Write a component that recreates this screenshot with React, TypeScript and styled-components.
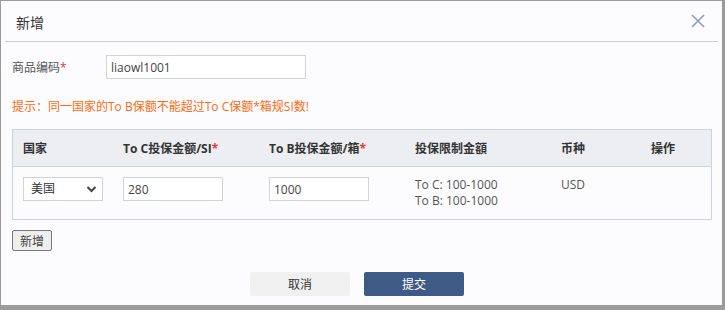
import React from "react";
import styled, { createGlobalStyle } from "styled-components";

const Global = createGlobalStyle`
  html, body { margin: 0; padding: 0; background: #9b9b9b; }
  body { font-family: "Open Sans", "Noto Sans CJK SC", sans-serif; font-size: 12px; color: #333; }
  * { box-sizing: border-box; }
`;

const Dialog = styled.div`
  margin: 1px 0 0 1px;
  width: 721px;
  height: 304px;
  background: #fcfcfe;
  display: flex;
  flex-direction: column;
  box-shadow: 0 1px 0 #c9c9c9;
`;

const Header = styled.div`
  height: 41px;
  margin: 0 4px;
  padding: 0 7px 0 11px;
  display: flex;
  align-items: center;
  justify-content: space-between;
  border-bottom: 1px solid #c9ccdc;
`;

const Title = styled.div`
  font-size: 14px;
  color: #333;
  padding-top: 1px;
`;

const Close = styled.button`
  border: none;
  background: none;
  padding: 0;
  margin-right: 6px;
  width: 14px;
  height: 14px;
  display: flex;
  cursor: pointer;
`;

const Body = styled.div`
  padding: 13px 10px 0 11px;
  display: flex;
  flex-direction: column;
`;

const FormRow = styled.div`
  display: flex;
  align-items: center;
  height: 24px;
`;

const Label = styled.div`
  width: 94px;
  color: #555;
`;

const Req = styled.span`
  color: #e33;
`;

const TextInput = styled.input<{ $w: number }>`
  width: ${(p) => p.$w}px;
  height: 24px;
  border: 1px solid #cfd3dc;
  background: #fff;
  padding: 0 4px;
  font-family: inherit;
  font-size: 12px;
  color: #444;
  outline: none;
`;

const Hint = styled.div`
  margin-top: 20px;
  color: #ff6a0f;
  line-height: 16px;
`;

const Table = styled.div`
  margin-top: 14px;
  border: 1px solid #c9d2de;
`;

const Grid = styled.div<{ $head?: boolean }>`
  display: grid;
  grid-template-columns: 100px 146px 146px 146px 90px 1fr;
  background: ${(p) => (p.$head ? "#eceef2" : "#fcfcfe")};
  height: ${(p) => (p.$head ? "36px" : "53px")};
  border-top: ${(p) => (p.$head ? "none" : "1px solid #c9d2de")};
  align-items: ${(p) => (p.$head ? "center" : "start")};
`;

const HeadCell = styled.div`
  padding-left: 10px;
  font-weight: 700;
  color: #333;
`;

const Cell = styled.div`
  padding: 10px 0 0 10px;
  color: #555;
  line-height: 16px;
`;

const SelectBox = styled.div`
  width: 80px;
  height: 24px;
  border: 1px solid #cfd3dc;
  background: #fff;
  display: flex;
  align-items: center;
  justify-content: space-between;
  padding: 0 5px 0 7px;
  color: #333;
`;

const SmallButton = styled.button`
  margin-top: 10px;
  align-self: flex-start;
  width: 40px;
  height: 21px;
  padding: 0;
  border: 1px solid #777;
  border-radius: 2px;
  background: #efefef;
  font-family: inherit;
  font-size: 12px;
  color: #444;
`;

const Footer = styled.div`
  margin-top: 21px;
  display: flex;
  justify-content: center;
  gap: 14px;
  padding-right: 10px;
`;

const FooterButton = styled.button<{ $primary?: boolean }>`
  width: 100px;
  height: 24px;
  border: none;
  border-radius: 2px;
  font-family: inherit;
  font-size: 12px;
  background: ${(p) => (p.$primary ? "#3e5a86" : "#f0f0f0")};
  color: ${(p) => (p.$primary ? "#fff" : "#333")};
`;

export default function App() {
  return (
    <>
      <Global />
      <Dialog>
        <Header>
          <Title>新增</Title>
          <Close aria-label="close">
            <svg width="14" height="14" viewBox="0 0 14 14">
              <path d="M1 1L13 13M13 1L1 13" stroke="#8a9cc0" strokeWidth="1.6" fill="none" />
            </svg>
          </Close>
        </Header>
        <Body>
          <FormRow>
            <Label>
              商品编码<Req>*</Req>
            </Label>
            <TextInput $w={200} defaultValue="liaowl1001" />
          </FormRow>
          <Hint>提示：同一国家的To B保额不能超过To C保额*箱规SI数!</Hint>
          <Table>
            <Grid $head>
              <HeadCell>国家</HeadCell>
              <HeadCell>
                To C投保金额/SI<Req>*</Req>
              </HeadCell>
              <HeadCell>
                To B投保金额/箱<Req>*</Req>
              </HeadCell>
              <HeadCell>投保限制金額</HeadCell>
              <HeadCell>币种</HeadCell>
              <HeadCell>操作</HeadCell>
            </Grid>
            <Grid>
              <Cell>
                <SelectBox>
                  <span>美国</span>
                  <svg width="11" height="8" viewBox="0 0 11 8">
                    <path d="M1.5 2L5.5 6L9.5 2" stroke="#444" strokeWidth="2" fill="none" />
                  </svg>
                </SelectBox>
              </Cell>
              <Cell>
                <TextInput $w={100} defaultValue="280" />
              </Cell>
              <Cell>
                <TextInput $w={100} defaultValue="1000" />
              </Cell>
              <Cell>
                <div>To C: 100-1000</div>
                <div>To B: 100-1000</div>
              </Cell>
              <Cell>USD</Cell>
              <Cell />
            </Grid>
          </Table>
          <SmallButton>新增</SmallButton>
          <Footer>
            <FooterButton>取消</FooterButton>
            <FooterButton $primary>提交</FooterButton>
          </Footer>
        </Body>
      </Dialog>
    </>
  );
}
